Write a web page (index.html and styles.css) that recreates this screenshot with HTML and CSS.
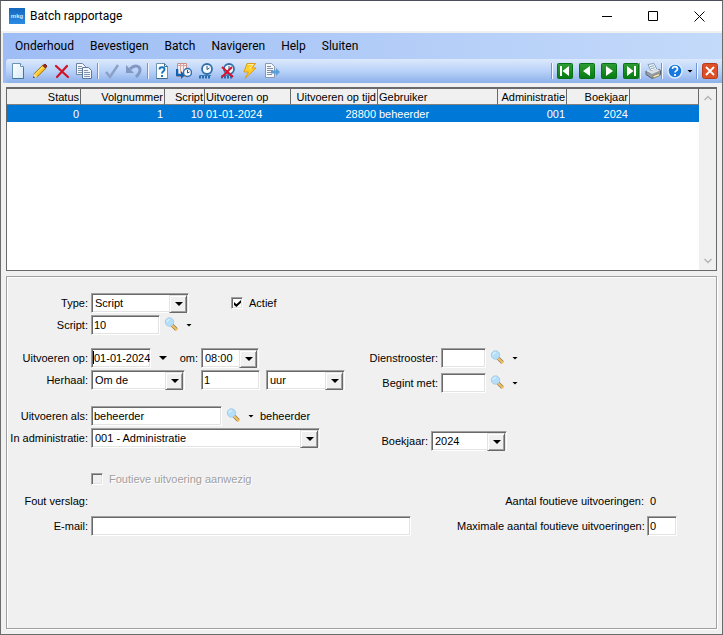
FILE: index.html
```
<!DOCTYPE html>
<html lang="nl">
<head>
  <meta charset="UTF-8" />
  <title>Batch rapportage</title>
  <meta name="viewport" content="width=device-width,initial-scale=1" />
  <link rel="stylesheet" href="styles.css">
</head>
<body>
  <!-- shared icons -->
  <svg class="defs" width="0" height="0">
    <defs>
      <linearGradient id="green" x1="0" y1="0" x2="0" y2="1"><stop offset="0" stop-color="#2f9c35"/><stop offset="1" stop-color="#077a12"/></linearGradient>
      <linearGradient id="logo" x1="0" y1="0" x2="0" y2="1"><stop offset="0" stop-color="#1467bd"/><stop offset="1" stop-color="#2a8be4"/></linearGradient>
      <linearGradient id="paper" x1="0" y1="0" x2="1" y2="1"><stop offset="0" stop-color="#fff"/><stop offset="1" stop-color="#d5e9f4"/></linearGradient>
      <symbol id="search" viewBox="0 0 16 16">
        <path d="M8 8l4.500 4.500" stroke="#8c7a58" stroke-width="3.600"/>
        <path d="M8.500 8.500l4 4" stroke="#f3c05c" stroke-width="2.200" stroke-linecap="round"/>
        <circle cx="5.500" cy="5" r="4.200" fill="#b5dff8" stroke="#a3cdea"/>
        <path d="M3 5a3 3 0 0 1 3-2.500" stroke="#e6f6ff" fill="none"/>
      </symbol>
      <symbol id="clock" viewBox="0 0 16 16">
        <path d="M1 14h12" stroke="#2a6cab" stroke-width="3" stroke-dasharray="2 1"/>
        <path d="M2 12.500h11" stroke="#397bb9"/>
        <circle cx="9" cy="6" r="5" fill="#f4f9fe" stroke="#326fa9" stroke-width="1.800"/>
        <path d="M9 3v3.500l2.500-1.500" stroke="#315780" fill="none"/>
      </symbol>
    </defs>
  </svg>

  <div class="window">
    <header class="titlebar">
      <svg class="logo" viewBox="0 0 16 16">
        <rect width="16" height="16" fill="url(#logo)"/>
        <text x="8" y="10" text-anchor="middle">mkg</text>
      </svg>
      <h1>Batch rapportage</h1>
      <div class="window-buttons">
        <button type="button" aria-label="Minimaliseren"><svg viewBox="0 0 11 11"><path d="M0 5.500h10"/></svg></button>
        <button type="button" aria-label="Maximaliseren"><svg viewBox="0 0 11 11"><path d="M.5.5h9v9h-9z"/></svg></button>
        <button type="button" aria-label="Sluiten"><svg viewBox="0 0 11 11"><path d="M.5.5l10 10M10.500.5l-10 10"/></svg></button>
      </div>
    </header>

    <div class="bars">
      <nav class="menu">
        <button type="button">Onderhoud</button>
        <button type="button">Bevestigen</button>
        <button type="button">Batch</button>
        <button type="button">Navigeren</button>
        <button type="button">Help</button>
        <button type="button">Sluiten</button>
      </nav>
      <div class="toolbar">
        <div class="tools">
          <button type="button" aria-label="Nieuw"><svg viewBox="0 0 16 16"><path d="M2.500.5h8l3 3v12h-11z" fill="url(#paper)" stroke="#6b93b1"/><path d="M10.500.5v3h3" fill="#fff" stroke="#6b93b1"/><path d="M2.500 15.500h11v-11" fill="none" stroke="#46759a"/></svg></button>
          <button type="button" aria-label="Wijzigen"><svg viewBox="0 0 16 16"><path d="M3 13L12.500 3.500" stroke="#9c6a10" stroke-width="5"/><path d="M3.500 12.500L12 4" stroke="#ffc928" stroke-width="3.500"/><path d="M3.500 11L10.500 4" stroke="#ffef91"/><path d="M1 15l1-4.500L5.500 14z" fill="#f4dba8"/><path d="M1 15l.6-2 1.400 1.400z" fill="#222"/><path d="M11 2.500l2-1.500 2 2-1.500 2z" fill="#a72b22" stroke="#75231e"/></svg></button>
          <button type="button" aria-label="Verwijderen"><svg viewBox="0 0 16 16"><path d="M2 3l12 11M13 3L3 14" stroke="#d11328" stroke-width="2.200" stroke-linecap="round"/></svg></button>
          <button type="button" aria-label="Kopiëren"><svg viewBox="0 0 16 16"><path d="M.5.5h6l3 3v8h-9z" fill="#f3f7fb" stroke="#6f83a5"/><path d="M2 3.500h4M2 5.500h5M2 7.500h5M2 9.500h5" stroke="#8093b1"/><path d="M6.500 4.500h6l3 3v8h-9z" fill="#f3f7fb" stroke="#60779c"/><path d="M8 7.500h4M8 9.500h6M8 11.500h6M8 13.500h6" stroke="#8093b1"/></svg></button>
          <span class="sep"></span>
          <button type="button" aria-label="Bevestigen" disabled><svg viewBox="0 0 16 16"><path d="M2 9l4 5 8-12" fill="none" stroke="#8c9fc4" stroke-width="2.400"/></svg></button>
          <button type="button" aria-label="Herstellen" disabled><svg viewBox="0 0 16 16"><path d="M4 6c5-5 10-3 10 1 0 3-2 5-4 7" fill="none" stroke="#8298c2" stroke-width="3"/><path d="M0 2v8h8z" fill="#8298c2"/></svg></button>
          <span class="sep"></span>
          <button type="button" aria-label="Info"><svg viewBox="0 0 16 16"><path d="M2.500.5h8l3 3v12h-11z" fill="#fff" stroke="#6b93b1"/><path d="M10.500.5v3h3M2.500 15.500h11" fill="none" stroke="#3c6a92"/><path d="M5.500 6.500c0-3 5-3 5 0 0 2-2.500 1.500-2.500 4M8 12v2" fill="none" stroke="#1473bd" stroke-width="1.900"/></svg></button>
          <button type="button" aria-label="Inplannen"><svg viewBox="0 0 16 16"><path d="M1.500.5h9v13h-9z" fill="#f3eef1" stroke="#c98f86"/><path d="M2 2.500h8M4.500 1v9M7.500 1v7" stroke="#d8a49b"/><path d="M1 6v6h5" fill="none" stroke="#1462ae" stroke-width="2.600"/><path d="M5 8l4 4-4 4z" fill="#1462ae"/><circle cx="11.500" cy="9.500" r="4" fill="#f4f9fe" stroke="#326fa9" stroke-width="1.400"/><path d="M11.500 7v3l2-1" fill="none" stroke="#315780"/></svg></button>
          <button type="button" aria-label="Batch starten"><svg><use href="#clock"/></svg></button>
          <button type="button" aria-label="Batch stoppen"><svg viewBox="0 0 16 16"><use href="#clock"/><path d="M2 4l11 10M12 4L2 14" stroke="#d9142b" stroke-width="2"/></svg></button>
          <button type="button" aria-label="Uitvoeren"><svg viewBox="0 0 16 16"><path d="M5 .5h8.500L10 5h4L3 15.500 6.500 9H2z" fill="#ffd02a" stroke="#df991b"/><path d="M6 1.500h5L7.500 6" fill="none" stroke="#fff09a"/></svg></button>
          <button type="button" aria-label="Exporteren"><svg viewBox="0 0 16 16"><path d="M1.500.5h6l3 3v11h-9z" fill="#f5f8fb" stroke="#8b99ae"/><path d="M3 3.500h4M3 5.500h6M3 7.500h6M3 9.500h4M3 11.500h5" stroke="#8290aa"/><path d="M7 7.500h5V5l4 4-4 4v-2.500H7z" fill="#5b9fda"/></svg></button>
        </div>
        <div class="tools tools-right">
          <span class="sep"></span>
          <button type="button" aria-label="Eerste"><svg viewBox="0 0 16 16"><rect x=".5" y=".5" width="15" height="15" rx="1" fill="url(#green)" stroke="#087218"/><path d="M3 3h2v10H3zM12 3v10L5.500 8z" fill="#fff"/></svg></button>
          <button type="button" aria-label="Vorige"><svg viewBox="0 0 16 16"><rect x=".5" y=".5" width="15" height="15" rx="1" fill="url(#green)" stroke="#087218"/><path d="M11 3v10L4 8z" fill="#fff"/></svg></button>
          <button type="button" aria-label="Volgende"><svg viewBox="0 0 16 16"><rect x=".5" y=".5" width="15" height="15" rx="1" fill="url(#green)" stroke="#087218"/><path d="M5 3v10l7-5z" fill="#fff"/></svg></button>
          <button type="button" aria-label="Laatste"><svg viewBox="0 0 16 16"><rect x=".5" y=".5" width="15" height="15" rx="1" fill="url(#green)" stroke="#087218"/><path d="M11 3h2v10h-2zM4 3v10l6.500-5z" fill="#fff"/></svg></button>
          <span class="sep"></span>
          <button type="button" aria-label="Afdrukken"><svg viewBox="0 0 16 16"><path d="M3 1.500l6-1 3 6-6 1.500z" fill="#f5f9fd" stroke="#849db8"/><path d="M5 3.500l4-.7M6 5.500l4-.7" stroke="#8aa4be"/><path d="M1 8l5 2 8-3.500 1.500 1v4l-8.500 4-6-4z" fill="#929ca8" stroke="#5a626c"/><path d="M1 8l3-1.500L6 8l6-2 3 1.500-8 3.500z" fill="#dde1e5"/><path d="M7.500 13l6-2.500 1.500 2-6 2.500z" fill="#f5eab3" stroke="#8a8873"/></svg></button>
          <span class="sep"></span>
          <button type="button" aria-label="Help"><svg viewBox="0 0 16 16"><circle cx="8" cy="8" r="7" fill="#1878dc" stroke="#dcecff" stroke-width="1.500"/><path d="M5.500 6c0-3.500 5-3 5 0 0 2-2.500 1.700-2.500 3.500M8 11v2" fill="none" stroke="#fff" stroke-width="1.700"/></svg></button>
          <span class="caret"></span>
          <span class="sep"></span>
          <button type="button" aria-label="Venster sluiten"><svg viewBox="0 0 16 16"><rect x=".5" y=".5" width="15" height="15" rx="2" fill="#dd4f27" stroke="#b83a1b"/><path d="M4 4l8 8M12 4l-8 8" stroke="#fff" stroke-width="1.800"/></svg></button>
        </div>
      </div>
    </div>

    <main>
      <div class="grid">
        <table>
          <colgroup>
            <col class="c-status"><col class="c-volg"><col class="c-script"><col class="c-op"><col class="c-tijd"><col class="c-user"><col class="c-adm"><col class="c-jaar"><col>
          </colgroup>
          <thead>
            <tr>
              <th class="num">Status</th>
              <th class="num">Volgnummer</th>
              <th class="num">Script</th>
              <th>Uitvoeren op</th>
              <th class="num">Uitvoeren op tijd</th>
              <th>Gebruiker</th>
              <th class="num">Administratie</th>
              <th class="num">Boekjaar</th>
              <th></th>
            </tr>
          </thead>
          <tbody>
            <tr class="selected">
              <td class="num">0</td>
              <td class="num">1</td>
              <td class="num">10</td>
              <td>01-01-2024</td>
              <td class="num">28800</td>
              <td>beheerder</td>
              <td class="num">001</td>
              <td class="num">2024</td>
              <td></td>
            </tr>
          </tbody>
        </table>
        <div class="scrollbar">
          <svg viewBox="0 0 8 6"><path d="M.5 5L4 1.500 7.500 5"/></svg>
          <svg viewBox="0 0 8 6"><path d="M.5 1L4 4.500 7.500 1"/></svg>
        </div>
      </div>

      <form class="panel">
        <section class="group">
          <div class="col">
            <div class="row">
              <label for="type">Type:</label>
              <span class="combo w-type"><select id="type"><option>Script</option></select></span>
              <span class="check active"><input type="checkbox" id="actief" checked><label for="actief">Actief</label></span>
            </div>
            <div class="row">
              <label for="script">Script:</label>
              <input class="w-script" type="text" id="script" value="10">
              <button class="lookup" type="button" aria-label="Script zoeken"><svg><use href="#search"/></svg><span class="caret"></span></button>
            </div>
          </div>
        </section>

        <section class="group">
          <div class="col">
            <div class="row">
              <label for="datum">Uitvoeren op:</label>
              <span class="edit w-date"><input type="text" id="datum" value="01-01-2024"></span>
              <button class="pick" type="button" aria-label="Datum kiezen"><span class="caret big"></span></button>
              <label class="om" for="tijd">om:</label>
              <span class="combo w-time"><select id="tijd"><option>08:00</option></select></span>
            </div>
            <div class="row">
              <label for="herhaal">Herhaal:</label>
              <span class="combo w-repeat"><select id="herhaal"><option>Om de</option></select></span>
              <input class="w-count" type="text" aria-label="Aantal" value="1">
              <span class="combo w-unit"><select aria-label="Eenheid"><option>uur</option></select></span>
            </div>
          </div>
          <div class="col side">
            <div class="row">
              <label for="rooster">Dienstrooster:</label>
              <input class="w-small" type="text" id="rooster">
              <button class="lookup" type="button" aria-label="Dienstrooster zoeken"><svg><use href="#search"/></svg><span class="caret"></span></button>
            </div>
            <div class="row">
              <label for="begint">Begint met:</label>
              <input class="w-small" type="text" id="begint">
              <button class="lookup" type="button" aria-label="Begint met zoeken"><svg><use href="#search"/></svg><span class="caret"></span></button>
            </div>
          </div>
        </section>

        <section class="group">
          <div class="col">
            <div class="row">
              <label for="als">Uitvoeren als:</label>
              <input class="w-user" type="text" id="als" value="beheerder">
              <button class="lookup" type="button" aria-label="Gebruiker zoeken"><svg><use href="#search"/></svg><span class="caret"></span></button>
              <span class="found">beheerder</span>
            </div>
            <div class="row">
              <label for="adm">In administratie:</label>
              <span class="combo w-adm"><select id="adm"><option>001 - Administratie</option></select></span>
            </div>
          </div>
          <div class="col side year">
            <div class="row">
              <label for="jaar">Boekjaar:</label>
              <span class="combo w-year"><select id="jaar"><option>2024</option></select></span>
            </div>
          </div>
        </section>

        <section class="group report">
          <div class="col grow">
            <div class="row">
              <span class="check indent"><input type="checkbox" id="foutief" disabled><label for="foutief">Foutieve uitvoering aanwezig</label></span>
            </div>
            <div class="row"><label for="verslag">Fout verslag:</label><output id="verslag"></output></div>
            <div class="row mail">
              <label for="email">E-mail:</label>
              <input class="w-mail" type="email" id="email">
            </div>
          </div>
          <div class="col errors">
            <div class="row"><label for="aantal">Aantal foutieve uitvoeringen:</label><output id="aantal">0</output></div>
            <div class="row"><label for="max">Maximale aantal foutieve uitvoeringen:</label><input class="w-max" type="text" id="max" value="0"></div>
          </div>
        </section>
      </form>
    </main>
  </div>
</body>
</html>
```

FILE: styles.css
```
* {
  box-sizing: border-box;
}
body {
  margin: 0;
  background: #f0f0f0;
  color: #000;
  font: 11px/16px "Liberation Sans", Arial, sans-serif;
}
button {
  display: flex;
  align-items: center;
  justify-content: center;
  padding: 0;
  border: 0;
  background: none;
  color: inherit;
  font: inherit;
}
.defs {
  position: absolute;
}
.window {
  display: flex;
  flex-direction: column;
  min-height: 100vh;
  border: 1px solid #6b6b6b;
  border-top-color: #4b4d58;
}

/* title bar */
.titlebar {
  display: flex;
  align-items: center;
  height: 30px;
  padding-left: 8px;
  background: #fff;
}
.logo {
  width: 16px;
  height: 16px;
}
.logo text {
  fill: #d5e8fb;
  font: bold 6px "Liberation Sans", sans-serif;
}
.titlebar h1 {
  margin: 0 auto 0 5px;
  font: 12px/16px Roboto, sans-serif;
}
.window-buttons {
  display: flex;
}
.window-buttons button {
  width: 46px;
  height: 28px;
}
.window-buttons svg {
  width: 11px;
  height: 11px;
  fill: none;
  stroke: #000;
}

/* menu and toolbar */
.bars {
  margin: 2px 0 0 2px;
  background: linear-gradient(90deg, #9ebdf5, #c4dafa);
}
.menu {
  display: flex;
  gap: 16px;
  height: 26px;
  padding-left: 12px;
  font: 12px/16px Roboto, sans-serif;
}
.toolbar {
  display: flex;
  justify-content: space-between;
  height: 24px;
  margin-left: 3px;
  padding: 0 4px 0 1px;
  border-radius: 3px 0 0 3px;
  background: linear-gradient(#dce9fc, #b9d2f8 50%, #8cb0ea);
}
.tools {
  display: flex;
  align-items: center;
}
.tools button {
  width: 22px;
}
.tools svg {
  width: 16px;
  height: 16px;
  fill: none;
}
.sep {
  width: 2px;
  height: 16px;
  margin: 0 2px;
  border-left: 1px solid #6f94d4;
  border-right: 1px solid #f5f9ff;
}
.tools-right button {
  width: 16px;
  margin-right: 6px;
}
.tools-right .sep {
  margin: 0 4px 0 0;
}
.tools-right button:has(+ .sep),
.tools-right button:last-child {
  margin-right: 0;
}
.tools-right button:has(+ .caret) {
  margin-right: 4px;
}
.tools-right .caret {
  margin-right: 3px;
}
.caret {
  width: 6px;
  height: 3px;
  background: #000;
  clip-path: polygon(0 0, 100% 0, 50% 100%);
}
.caret.big {
  width: 8px;
  height: 4px;
}

main {
  display: flex;
  flex: 1;
  flex-direction: column;
  gap: 5px;
  padding: 4px 5px 5px;
}

/* batch list */
.grid {
  display: flex;
  height: 184px;
  border: 1px solid #696969;
  border-top-width: 2px;
  background: #fff;
}
table {
  flex: 1;
  width: 100%;
  height: 33px;
  border-collapse: separate;
  border-spacing: 0;
  table-layout: fixed;
}
.c-status { width: 74px; }
.c-volg { width: 84px; }
.c-script { width: 40px; }
.c-op { width: 86px; }
.c-tijd { width: 87px; }
.c-user { width: 120px; }
.c-adm { width: 69px; }
.c-jaar { width: 63px; }
th {
  height: 16px;
  padding: 1px 1px 0;
  border-right: 1px solid #696969;
  border-bottom: 1px solid #808080;
  background: #f0f0f0;
  font-weight: normal;
  line-height: 14px;
  text-align: left;
  white-space: nowrap;
}
td {
  height: 17px;
  padding: 0 2px 0 1px;
  line-height: 16px;
  white-space: nowrap;
}
.num {
  text-align: right;
}
.selected {
  background: #0078d7;
  color: #fff;
}
.scrollbar {
  display: flex;
  flex-direction: column;
  align-items: center;
  justify-content: space-between;
  width: 17px;
  padding: 6px 0;
  background: #f0f0f0;
}
.scrollbar svg {
  width: 8px;
  height: 6px;
  fill: none;
  stroke: #b5b5b5;
  stroke-width: 1.5;
}

/* details */
.panel {
  display: flex;
  flex: 1;
  flex-direction: column;
  gap: 13px;
  padding: 16px 39px 15px 3px;
  border: 1px solid #a0a0a0;
  box-shadow: inset 1px 1px #fff, 1px 1px #fff;
}
.group {
  display: flex;
}
.report {
  margin-top: 5px;
}
.col {
  display: flex;
  flex-direction: column;
  gap: 2px;
  width: 350px;
}
.row {
  display: flex;
  align-items: center;
  height: 20px;
  white-space: nowrap;
}
.row > label {
  width: 78px;
  margin-right: 3px;
  text-align: right;
}
.side {
  width: auto;
  gap: 5px;
}
.year {
  margin-top: 25px;
  margin-left: -10px;
}
.grow {
  flex: 1;
}
.mail {
  margin-top: 3px;
}
.errors {
  width: auto;
  gap: 5px;
  margin-top: 22px;
  margin-left: 46px;
}
.errors .row > label {
  width: 187px;
}
output {
  padding-left: 3px;
}

input[type="text"],
input[type="email"],
.combo {
  height: 20px;
  border: 1px solid;
  border-color: #a0a0a0 #fff #fff #a0a0a0;
  background: #fff;
  box-shadow: inset 1px 1px #696969, inset -1px -1px #e3e3e3;
}
input,
select {
  border-radius: 0;
  color: inherit;
  font: inherit;
}
input[type="text"],
input[type="email"] {
  padding: 0 0 0 2px;
  outline: 0;
}
.combo {
  display: block;
  position: relative;
}
.combo select {
  appearance: none;
  width: 100%;
  height: 18px;
  padding: 0 18px 0 3px;
  border: 0;
  outline: 0;
  background: none;
}
.combo::before {
  content: "";
  position: absolute;
  top: 1px;
  right: 1px;
  width: 16px;
  height: 16px;
  border: 1px solid;
  border-color: #e3e3e3 #696969 #696969 #e3e3e3;
  background: #f0f0f0;
  box-shadow: inset 1px 1px #fff, inset -1px -1px #a0a0a0;
  pointer-events: none;
}
.combo::after {
  content: "";
  position: absolute;
  top: 8px;
  right: 5px;
  width: 8px;
  height: 4px;
  background: #000;
  clip-path: polygon(0 0, 100% 0, 50% 100%);
  pointer-events: none;
}
.w-type { width: 98px; }
.w-script { width: 69px; }
.w-date { width: 60px; }
.w-date input { width: 100%; }
.w-time { width: 58px; }
.w-repeat { width: 94px; }
.w-count { width: 59px; margin-left: 16px; }
.w-unit { width: 79px; margin-left: 6px; }
.w-small { width: 45px; }
.w-user { width: 131px; }
.w-adm { width: 229px; }
.w-year { width: 76px; }
.w-mail { flex: 1; min-width: 0; }
.w-max { width: 30px; }

/* text caret of the focused date field */
.edit {
  display: block;
  position: relative;
}
.edit::after {
  content: "";
  position: absolute;
  top: 3px;
  left: 2px;
  width: 1px;
  height: 13px;
  background: #000;
}
.lookup {
  gap: 6px;
  margin-left: 4px;
}
.lookup svg {
  width: 16px;
  height: 16px;
}
.pick {
  margin-left: 8px;
}
.row > .om {
  width: 31px;
}
.found {
  margin-left: 6px;
}
.check {
  display: flex;
  align-items: center;
  gap: 6px;
}
.check.active {
  margin-left: 42px;
}
.check.indent {
  margin-left: 81px;
}
.check input {
  appearance: none;
  width: 12px;
  height: 12px;
  margin: 0;
  border: 1px solid;
  border-color: #a0a0a0 #fff #fff #a0a0a0;
  background: #fff;
  box-shadow: inset 1px 1px #696969, inset -1px -1px #e3e3e3;
}
.check input:checked::before {
  content: "";
  display: block;
  width: 7px;
  height: 7px;
  margin: 2px;
  background: #000;
  clip-path: polygon(0 30%, 35% 60%, 100% 0, 100% 40%, 35% 100%, 0 70%);
}
.check input:disabled {
  background: #f0f0f0;
}
.check input:disabled + label {
  color: #a0a0a0;
  text-shadow: 1px 1px #fff;
}
```
